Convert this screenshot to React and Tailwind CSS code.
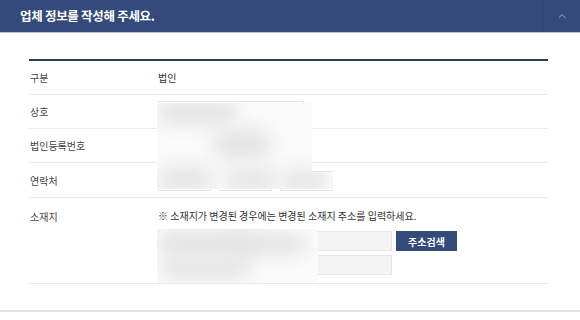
import { ChevronUp } from 'lucide-react';

const Row = ({ label, children, className = '' }) => (
    <div className={`flex border-b border-[#ebebeb] ${className}`}>
        <div className="w-[129px] shrink-0 pl-[1px] text-[10px] text-[#444]">{label}</div>
        <div className="flex-1 text-[10px] text-[#333]">{children}</div>
    </div>
);

const Field = ({ className = '' }) => (
    <div className={`h-[20px] border border-[#e4e4e4] bg-white ${className}`} />
);

// privacy smudge laid over the filled-in values
const Smudge = ({ className, spots }) => (
    <div className={`absolute overflow-hidden bg-[#fbfbfb] ${className}`}>
        {spots.map((s, i) => (
            <div key={i} className={`absolute rounded-full bg-[#e4e4e4] blur-[9px] ${s}`} />
        ))}
    </div>
);

export default function App() {
    return (
        <div className="relative w-[580px] h-[320px] overflow-hidden bg-white font-['Noto_Sans_CJK_KR',sans-serif]">
            <div className="flex h-[33px] bg-[#344a7a] border-b border-[#b7c1d9]">
                <div className="flex items-center pl-[20px] text-[12.5px] font-bold text-white tracking-[-0.3px]">
                    업체 정보를 작성해 주세요.
                </div>
                <div className="ml-auto flex w-[38px] items-center justify-center border-l border-[#2e426f]">
                    <ChevronUp size={12} strokeWidth={1.5} className="text-[#c8d0e2] -mt-[1px]" />
                </div>
            </div>

            <div className="px-[29px] pt-[26px]">
                <div className="w-[519px] border-t-2 border-[#2d3b5c]">
                    <Row label="구분" className="h-[34px] items-center">법인</Row>
                    <Row label="상호" className="h-[34px] items-center">
                        <Field className="w-[146px] -mt-[2px]" />
                    </Row>
                    <Row label="법인등록번호" className="h-[34px] items-center">
                        <div className="flex gap-[8px]">
                            <Field className="w-[70px]" />
                            <Field className="w-[76px]" />
                        </div>
                    </Row>
                    <Row label="연락처" className="h-[35px] items-center">
                        <div className="flex gap-[8px] pt-[2px]">
                            <Field className="w-[53px]" />
                            <Field className="w-[53px]" />
                            <Field className="w-[53px]" />
                        </div>
                    </Row>
                    <Row label="소재지" className="h-[86px] pt-[11px]">
                        <div className="leading-[14px]">※ 소재지가 변경된 경우에는 변경된 소재지 주소를 입력하세요.</div>
                        <div className="mt-[8px] flex gap-[4px]">
                            <div className="h-[20px] w-[234px] border border-[#e6e6e6] bg-[#f4f4f4]" />
                            <button className="h-[20px] w-[61px] bg-[#344a7a] text-[10px] font-bold text-white">
                                주소검색
                            </button>
                        </div>
                        <div className="mt-[4px] h-[20px] w-[234px] border border-[#e6e6e6] bg-[#f4f4f4]" />
                    </Row>
                </div>
            </div>

            <div className="mt-[26px] border-t-2 border-[#e4e4e4]" />

            <Smudge
                className="left-[157px] top-[103px] w-[155px] h-[86px]"
                spots={[
                    'left-[0px] top-[-4px] w-[80px] h-[26px]',
                    'left-[55px] top-[26px] w-[60px] h-[30px]',
                    'left-[0px] top-[64px] w-[56px] h-[24px]',
                    'left-[68px] top-[66px] w-[52px] h-[22px]',
                    'left-[124px] top-[66px] w-[44px] h-[22px]',
                ]}
            />
            <Smudge
                className="left-[305px] top-[172px] w-[28px] h-[17px]"
                spots={['-left-[24px] top-[-2px] w-[46px] h-[22px]']}
            />
            <Smudge
                className="left-[157px] top-[229px] w-[161px] h-[54px]"
                spots={[
                    'left-[0px] top-[0px] w-[100px] h-[28px]',
                    'left-[80px] top-[4px] w-[70px] h-[22px]',
                    'left-[4px] top-[28px] w-[90px] h-[22px]',
                ]}
            />
        </div>
    );
}
